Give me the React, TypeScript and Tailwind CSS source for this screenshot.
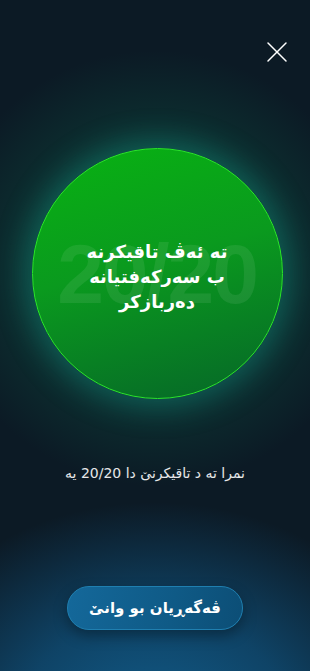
import { X } from "lucide-react";

export default function App() {
    return (
        <div
            dir="rtl"
            className="relative w-[310px] h-[671px] overflow-hidden bg-[#0c1a25] flex flex-col items-center"
            style={{ fontFamily: '"DejaVu Sans", "Noto Sans", sans-serif' }}
        >
            {/* background glows */}
            <div className="absolute left-1/2 top-[268px] -translate-x-1/2 -translate-y-1/2 w-[440px] h-[440px] rounded-full bg-[radial-gradient(circle,rgba(16,130,70,0.6)_0%,rgba(12,90,70,0.35)_42%,rgba(12,26,37,0)_70%)] pointer-events-none" />
            <div className="absolute left-1/2 top-[730px] -translate-x-1/2 -translate-y-1/2 w-[560px] h-[460px] rounded-full bg-[radial-gradient(ellipse,rgba(18,100,150,0.9)_0%,rgba(16,85,130,0.7)_35%,rgba(12,26,37,0)_70%)] pointer-events-none" />

            <div className="relative z-10 w-full flex pr-[15px] pt-[34px]" dir="ltr">
                <div className="flex-1" />
                <X className="w-[36px] h-[36px] text-white" strokeWidth={1} />
            </div>

            <div className="relative z-10 mt-[78px] translate-x-[2px] w-[251px] h-[251px] rounded-full border border-[#2ae62a] bg-[linear-gradient(165deg,#08b212_0%,#0a9a1e_45%,#066628_100%)] shadow-[0_0_30px_8px_rgba(20,160,140,0.4)] flex items-center justify-center">
                <span dir="ltr" className="absolute text-[84px] font-bold text-white/[0.08] tracking-tight leading-none" style={{ fontFamily: '"Liberation Sans", sans-serif' }}>
                    20/20
                </span>
                <p className="relative mt-[6px] text-white text-[18px] font-bold leading-[25px] text-center">
                    تە ئەڤ تاقیکرنە
                    <br />
                    ب سەرکەفتیانە
                    <br />
                    دەربازکر
                </p>
            </div>

            <p className="relative z-10 mt-[64px] text-white/90 text-[14px]">
                نمرا تە د تاقیکرنێ دا 20/20 یە
            </p>

            <button className="relative z-10 mt-[102px] w-[176px] h-[44px] rounded-full border border-[#1f7fb0] bg-[linear-gradient(100deg,#14689a_0%,#0f5a86_60%,#0c4e76_100%)] shadow-[0_6px_14px_rgba(0,0,0,0.35)] text-white text-[15px] font-bold">
                ڤەگەڕیان بو وانێ
            </button>
        </div>
    );
}
